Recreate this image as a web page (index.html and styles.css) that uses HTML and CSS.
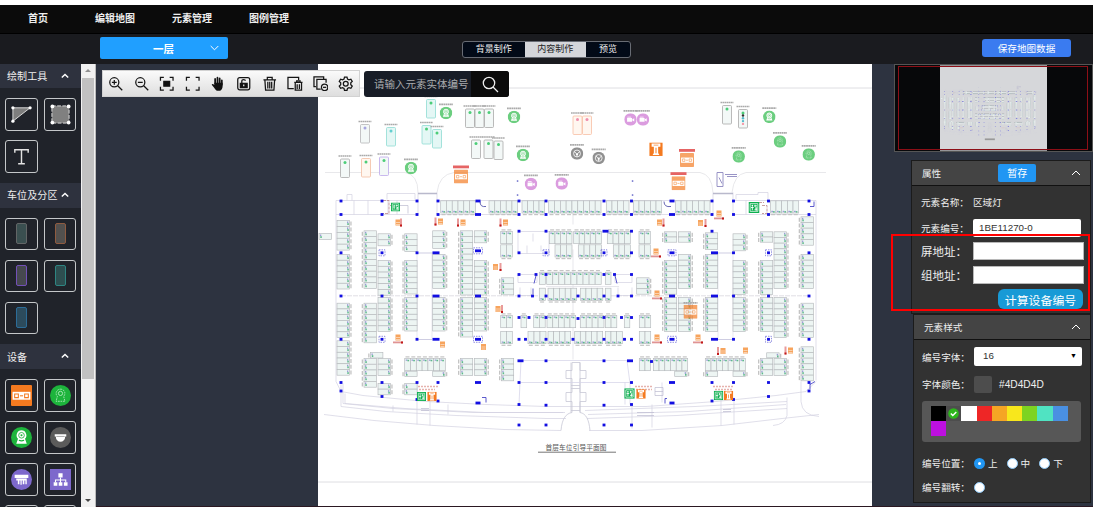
FILE: index.html
```html
<!DOCTYPE html>
<html lang="zh-CN">
<head>
<meta charset="utf-8">
<title>编辑地图</title>
<link rel="stylesheet" href="styles.css">
</head>
<body>
<svg width="0" height="0" class="defs">
  <defs>
    <symbol id="up" viewBox="0 0 10 6"><path d="M1 5l4-4 4 4" fill="none" stroke="currentColor"/></symbol>
    <symbol id="screen" viewBox="0 0 20 20"><rect width="20" height="20" rx="1" fill="#f47a20"/><rect x="1.500" y="6.500" width="17" height="7.500" fill="#fff"/><path d="M3.500 8.500H7v3.500H3.500zM13 8.500h3.500v3.500H13z" fill="none" stroke="#f47a20"/><path d="M8.500 10.300h3" stroke="#f47a20"/></symbol>
    <symbol id="cam" viewBox="0 0 20 20"><circle cx="10" cy="10" r="10" fill="#1db43c"/><path d="M10 3.200a4.700 4.700 0 0 1 3.300 8l.7 2 1 2.800H5l1-2.800.7-2a4.700 4.700 0 0 1 3.300-8z" fill="#fff"/><circle cx="10" cy="7.900" r="2.700" fill="none" stroke="#1db43c" stroke-width=".8"/><circle cx="10" cy="7.900" r="1" fill="#1db43c"/><path d="M7.500 12.700q2.500 1 5 0" fill="none" stroke="#1db43c"/></symbol>
    <symbol id="camline" viewBox="0 0 20 20"><circle cx="10" cy="10" r="10" fill="#1db43c"/><path d="M10 4a4 4 0 0 1 3 6.800l1.200 4.700H5.800L7 10.800A4 4 0 0 1 10 4z" fill="none" stroke="#b9ecc3" stroke-width=".8" stroke-dasharray="1.600 .8"/><circle cx="10" cy="8" r="2" fill="none" stroke="#b9ecc3" stroke-width=".8"/></symbol>
    <symbol id="dome" viewBox="0 0 20 20"><circle cx="10" cy="10" r="10" fill="#5b5b5b"/><path d="M4.500 7h11v2h-1a4.500 5 0 0 1-9 0h-1z" fill="#fff"/><path d="M6 9h8" stroke="#777" stroke-width=".6"/></symbol>
    <symbol id="purplecam" viewBox="0 0 20 20"><circle cx="10" cy="10" r="10" fill="#b83cc0"/><path d="M4.500 7.500h8v6h-8zM13 9.500l3-1.500v5l-3-1.500zM5 5.500h6v1.300H5z" fill="#fff"/></symbol>
    <symbol id="reel" viewBox="0 0 20 20"><circle cx="10" cy="10" r="10" fill="#555"/><circle cx="10" cy="10" r="5.500" fill="none" stroke="#fff" stroke-width="1.300"/><circle cx="10" cy="11" r="1.800" fill="#fff"/><path d="M5.500 7l3 2.500M14.500 7l-3 2.500M10 11v4" stroke="#fff" stroke-width="1.500"/></symbol>
    <symbol id="pillar" viewBox="0 0 20 20"><rect width="20" height="20" fill="#f47a20"/><path d="M3.500 1.500h13v5h-3.300v9l1.800 3H5l1.800-3v-9H3.500z" fill="#fff"/><path d="M6.500 4h7" stroke="#f47a20"/><path d="M9 8h2v8H9z" fill="#f7a15f"/></symbol>
    <symbol id="lift" viewBox="0 0 20 20"><rect width="20" height="20" fill="#0daf50"/><path d="M3 3h14v14H3z" fill="none" stroke="#fff" stroke-width="1.300"/><circle cx="7" cy="6.500" r="1.500" fill="#fff"/><path d="M7 8v7M4.500 10h5M12 5v4M10.500 7h5M12 11h4M14 10v6M11 14h5" stroke="#fff" stroke-width="1.600"/></symbol>
  </defs>
</svg>
<div class="app">
  <nav class="nav"><a>首页</a><a>编辑地图</a><a>元素管理</a><a>图例管理</a></nav>
  <header class="bar">
    <button class="floor"><span>一层</span><svg width="9" height="6" viewBox="0 0 9 6"><path d="M.7 1l3.800 3.800L8.300 1" fill="none" stroke="#fff"/></svg></button>
    <div class="tabs"><span>背景制作</span><span class="on">内容制作</span><span>预览</span></div>
    <button class="save">保存地图数据</button>
  </header>
  <main class="work">
    <aside class="side">
      <h3 class="top">绘制工具<svg class="chev"><use href="#up"/></svg></h3>
      <div class="tiles">
        <div class="tile"><svg viewBox="0 0 22 22"><path d="M2 4h18L2 18z" fill="#7d7d7d"/><path d="M2 4h18L2 18z" fill="none" stroke="#ddd"/><g fill="#fff"><circle cx="2" cy="4" r="1.700"/><circle cx="20" cy="4" r="1.700"/><circle cx="2" cy="18" r="1.700"/></g></svg></div>
        <div class="tile"><svg viewBox="0 0 22 22"><rect x="2" y="2" width="18" height="18" fill="#808080" stroke="#ddd" stroke-dasharray="4 1.500"/><g fill="#fff"><circle cx="2.500" cy="2.500" r="2"/><circle cx="19.500" cy="2.500" r="2"/><circle cx="2.500" cy="19.500" r="2"/><circle cx="19.500" cy="19.500" r="2"/></g></svg></div>
        <div class="tile"><svg viewBox="0 0 22 22"><path d="M4 7V4h14v3M11 4v14.500M7.500 18.500h7" fill="none" stroke="#e2e2e2" stroke-width="1.500"/></svg></div>
      </div>
      <h3>车位及分区<svg class="chev"><use href="#up"/></svg></h3>
      <div class="tiles">
        <div class="tile"><i class="lot gray"></i></div><div class="tile"><i class="lot orange"></i></div>
        <div class="tile"><i class="lot violet"></i></div><div class="tile"><i class="lot teal"></i></div>
        <div class="tile"><i class="lot blue"></i></div>
      </div>
      <h3>设备<svg class="chev"><use href="#up"/></svg></h3>
      <div class="tiles">
        <div class="tile"><svg><use href="#screen"/></svg></div><div class="tile"><svg><use href="#camline"/></svg></div>
        <div class="tile"><svg><use href="#cam"/></svg></div><div class="tile"><svg><use href="#dome"/></svg></div>
        <div class="tile"><svg viewBox="0 0 20 20"><circle cx="10" cy="10" r="10" fill="#7d68cc"/><path d="M3.500 5.500h13v3h-13zM5 9h10v5.500h-1.300V11h-1v3.500h-1.500V11h-1v4H9v-4H8v3.500H6.500V11H5z" fill="#fff"/></svg></div>
        <div class="tile"><svg viewBox="0 0 20 20"><rect width="20" height="20" fill="#7d68cc"/><path d="M8 4h4v4H8zM3.500 12.500H7V16H3.500zM8.300 12.500h3.500V16H8.300zM13.200 12.500h3.500V16h-3.500z" fill="#fff"/><path d="M10 8v5M5.200 12.500v-2H15v2" fill="none" stroke="#fff"/></svg></div>
        <div class="tile"></div><div class="tile"></div>
      </div>
    </aside>
    <div class="scroll"><b class="tri t-up"></b><div class="thumb"></div><b class="tri t-down"></b></div>
    <section class="stage">
      <svg class="map" viewBox="318 65 554 442">
        <path d="M318 88.500h554M318 482.500h554" stroke="#dedee2"/>
        <g id="plan"></g>
        <g id="pins"></g>
        <text x="545.500" y="450.300" textLength="61" class="caption">首层车位引导平面图</text>
        <path d="M538 452.700h78" stroke="#666" stroke-width=".9"/>
      </svg>
      <div class="tools">
        <svg viewBox="0 0 16 16"><circle cx="6.500" cy="6.500" r="4.700"/><path d="M10 10l4.700 4.700M4 6.500h5M6.500 4v5"/></svg>
        <svg viewBox="0 0 16 16"><circle cx="6.500" cy="6.500" r="4.700"/><path d="M10 10l4.700 4.700M4 6.500h5"/></svg>
        <svg viewBox="0 0 16 16"><path d="M1.500 5V1.500H5M11 1.500h3.500V5M14.500 11v3.500H11M5 14.500H1.500V11"/><path d="M5 5.500h6v5H5z" fill="#111"/></svg>
        <svg viewBox="0 0 16 16"><path d="M1.500 5V1.500H5M11 1.500h3.500V5M14.500 11v3.500H11M5 14.500H1.500V11"/></svg>
        <svg viewBox="0 0 16 16"><path d="M5.300 8V3M7.700 7.500V1.800M10 7.500V2.500M12.200 9V4.500" stroke-width="1.800" stroke-linecap="round"/><path d="M4.500 7h8.500v3.500c0 2-1 4-2.500 4.700H7C5 13.500 3.500 11 1.800 9c0-1.300 1.500-1 2.700.3z" fill="#111" stroke="none"/></svg>
        <svg viewBox="0 0 16 16"><rect x="1.800" y="1.800" width="12.400" height="12.400" rx="2"/><path d="M4.500 7.500h7v4.500h-7z" fill="#111"/><path d="M6 7.500V5c0-1.800 3.700-1.800 3.700 0"/><path d="M8 8.700v2" stroke="#eee"/></svg>
        <svg viewBox="0 0 16 16"><path d="M1.500 4h13M5.500 3.500v-2h5v2M3 4.500l.7 10h8.600l.7-10M6 6v7M8 6v7M10 6v7"/></svg>
        <svg viewBox="0 0 16 16"><path d="M7 13H1V1.500h11V4M7.500 6.500H16M10 6V5h3.500v1M8.500 7v7.500h6.500V7M10.500 8.500v5M12.800 8.500v5"/></svg>
        <svg viewBox="0 0 16 16"><path d="M3 11H1V1h10v2M8 13.500H4V3.500h9.500V7"/><circle cx="12" cy="11.700" r="3.300"/><path d="M10.300 11.700h3.400"/></svg>
        <svg viewBox="0 0 16 16"><path d="M6.700 1.200h2.600l.5 2 1.500.8 2-.7 1.400 2.300-1.500 1.400v2l1.500 1.400-1.400 2.300-2-.7-1.500.8-.5 2H6.700l-.5-2-1.500-.8-2 .7-1.400-2.300L2.800 9V7L1.300 5.600l1.400-2.300 2 .7 1.500-.8z"/><circle cx="8" cy="8" r="2.500"/></svg>
      </div>
      <div class="search"><span>请输入元素实体编号</span><i><svg width="17" height="17" viewBox="0 0 17 17"><circle cx="7" cy="7" r="5.700"/><path d="M11 11l5 5"/></svg></i></div>
      <div class="mini"><svg viewBox="318 65 554 442"><rect x="318" y="65" width="554" height="442" fill="#d6d7da"/><use href="#plan" opacity=".75"/><path d="M550 448h52" stroke="#999" stroke-width="9"/></svg><div class="view"></div></div>
      <div class="props">
        <section class="panel first">
          <div class="phead">属性<button>暂存</button><svg class="chev"><use href="#up"/></svg></div>
          <div class="row name"><label>元素名称：</label><span>区域灯</span></div>
          <div class="row num"><label>元素编号：</label><span class="input">1BE11270-0</span></div>
          <div class="row addr"><label>屏地址：</label><span class="box"></span></div>
          <div class="row addr"><label>组地址：</label><span class="box"></span></div>
          <button class="calc">计算设备编号</button>
        </section>
        <section class="panel second">
          <div class="phead">元素样式<svg class="chev"><use href="#up"/></svg></div>
          <div class="row font"><label>编号字体：</label><span class="input">16<b>▼</b></span></div>
          <div class="row color"><label>字体颜色：</label><i class="chip"></i><span>#4D4D4D</span></div>
          <div class="palette"><i class="c0"></i><i class="c1"><svg width="11" height="11" viewBox="0 0 11 11"><circle cx="5.500" cy="5.500" r="5.300" fill="#2db51c"/><path d="M2.800 5.500l2 2 3.500-3.500" fill="none" stroke="#fff" stroke-width="1.400"/></svg></i><i class="c2"></i><i class="c3"></i><i class="c4"></i><i class="c5"></i><i class="c6"></i><i class="c7"></i><i class="c8"></i><i class="c9"></i></div>
          <div class="row pos"><label>编号位置：</label><i class="radio sel"></i><span>上</span><i class="radio"></i><span>中</span><i class="radio"></i><span>下</span></div>
          <div class="row flip"><label>编号翻转：</label><i class="radio"></i></div>
        </section>
      </div>
      <div class="mark"></div>
    </section>
  </main>
</div>
<script src="map.js"></script>
</body>
</html>
```
FILE: styles.css
```css
* { box-sizing: border-box; }
body { margin: 0; background: #fff; font-family: "Liberation Sans", "Noto Sans CJK SC", sans-serif; font-size: 10px; color: #eee; }
button { border: 0; padding: 0; color: #fff; font-family: inherit; }
i { font-style: normal; display: block; }
.defs { position: absolute; }
.app { width: 1093px; height: 507px; padding-top: 5px; overflow: hidden; display: flex; flex-direction: column; }
.nav { height: 29px; flex: none; background: #0b0b0b; border-bottom: 1px solid #000; display: flex; align-items: center; padding-left: 28px; font-weight: 600; }
.nav a { margin-right: 37px; line-height: 28px; }
.nav a:first-child { margin-right: 47px; }
.bar { height: 30px; flex: none; background: #1a1b1f; display: flex; align-items: flex-start; padding: 3px 22px 0 100px; }
.floor { width: 128px; height: 22px; margin-right: 234px; background: #209fff; border-radius: 2px; display: flex; align-items: center; justify-content: flex-end; font-size: 10.5px; font-weight: 700; padding-right: 9px; }
.floor span { margin-right: 36px; }
.tabs { height: 17px; margin-top: 4px; display: flex; border: 1px solid #686c74; border-radius: 3px; overflow: hidden; background: #020a17; font-size: 9px; line-height: 15px; text-align: center; width: 169px; }
.tabs span { width: 61.500px; }
.tabs span:last-child { flex: 1; }
.tabs .on { background: #d4d6da; color: #222; }
.save { margin: 2px 0 0 auto; width: 89px; height: 18px; background: #3a7bf0; border-radius: 3px; font-size: 9.600px; }
.work { flex: 1; min-height: 0; display: flex; background: #2d3340; }
.side { width: 81px; background: #20232a; overflow: hidden; flex: none; }
.side h3 { margin: 0; height: 25px; background: #2e323e; padding: 0 12px 1px 7px; display: flex; align-items: center; justify-content: space-between; font-weight: 400; font-size: 10px; letter-spacing: .1px; }
.side .top { height: 24px; }
.chev { width: 10px; height: 6px; color: #fff; }
.side .chev { width: 8px; stroke-width: 1.800; }
.side .chev use { stroke-width: 1.800; }
.tiles { display: grid; grid-template-columns: 33px 32px; grid-auto-rows: 32.500px; gap: 9.500px 6px; padding: 10px 5px; }
.tile { border: 1px solid #c4c7c9; border-radius: 3px; display: flex; align-items: center; justify-content: center; }
.tile svg { width: 21px; height: 21px; }
.lot { width: 11px; height: 21px; border: 1px solid #555f61; border-radius: 2px; background: #3a4f50; }
.lot.gray { border-color: #626566; }
.lot.orange { background: #52504e; border-color: #8f5b40; }
.lot.violet { background: #46484f; border-color: #7250b8; }
.lot.teal { background: #2d4e50; border-color: #2e8582; }
.lot.blue { background: #2c4b5d; border-color: #2c6c98; }
.scroll { width: 15px; flex: none; background: #f1f1f1; border-right: 1px solid #bbb; display: flex; flex-direction: column; align-items: center; }
.tri { border: 3px solid transparent; margin: 2px 0 6px; }
.t-up { border-bottom-color: #909090; }
.t-down { border-top-color: #444; margin: auto 0 2px; }
.thumb { width: 12px; height: 301px; background: #c1c1c1; }
.stage { flex: 1; position: relative; overflow: hidden; border-bottom: 1px solid #2b1822; }
.map { position: absolute; left: 222px; top: 0; width: 554px; height: 443px; background: #fff; }
.caption { font: 6.700px "Noto Sans CJK SC", sans-serif; fill: #555; }
.tools { position: absolute; left: 6px; top: 6px; width: 258px; height: 27px; padding: 0 5px; background: linear-gradient(#fafafa, #dedede); border: 1px solid #d2d2d2; display: flex; align-items: center; justify-content: space-between; }
.tools svg { width: 15.500px; height: 15.500px; fill: none; stroke: #151515; stroke-width: 1.300; }
.search { position: absolute; left: 268px; top: 7px; width: 145px; height: 26px; background: #181d27; border-radius: 3px; overflow: hidden; display: flex; align-items: center; font-size: 10.500px; color: #a9abae; }
.search span { flex: 1; padding: 0 0 2px 10px; white-space: nowrap; }
.search i { width: 38px; height: 26px; background: #0b0b0b; display: flex; align-items: center; justify-content: center; }
.search svg { fill: none; stroke: #eee; stroke-width: 1.300; }
.mini { position: absolute; left: 798px; top: 0; width: 199px; height: 88px; background: #07080a; border: 1px solid #555; display: flex; }
.mini svg { width: 107px; height: 86px; margin-left: 45px; }
.view { position: absolute; left: 3px; top: 1px; width: 190px; height: 84px; border: 1px solid #8d0f17; }
.props { position: absolute; left: 815px; top: 96px; width: 180px; }
.panel { background: #323232; border: 1px solid #1b1b1b; }
.first { height: 154px; }
.second { margin: 0 0 0 2px; height: 189px; }
.phead { height: 25px; background: #444; border-bottom: 1px solid #111; display: flex; align-items: center; padding: 0 9px 1px 10px; font-size: 9.600px; }
.phead .chev { margin-left: auto; }
.phead button { width: 38px; height: 18px; margin-left: 57px; background: #2196f3; border-radius: 2px; font-size: 10px; }
.row { display: flex; align-items: center; font-size: 9.600px; padding-left: 9px; white-space: nowrap; }
.row label { width: 52px; }
.name { height: 32px; }
.num { height: 20px; }
.input { width: 108px; height: 18px; border-radius: 2px; background: #fff; color: #333; line-height: 18px; padding: 0 5px 0 6px; font-size: 9.800px; display: flex; justify-content: space-between; }
.input b { color: #000; font-size: 7px; }
.addr { height: 24px; font-size: 11.500px; }
.num + .addr { margin-top: 1px; }
.box { width: 111px; height: 18px; border: 1px solid #b8b8b8; background: #fff; margin-top: 0; }
.calc { display: block; width: 85px; height: 20px; margin: 2px 0 0 86px; border-radius: 6px; background: #189ad6; font-size: 11.900px; }
.font { height: 33px; padding-left: 8px; }
.font .input { padding-left: 9px; height: 19px; }
.color { height: 22px; padding-left: 8px; }
.color span { font-size: 10.200px; }
.chip { width: 18px; height: 17px; border-radius: 2px; background: #4d4d4d; margin-right: 7px; }
.palette { margin: 6px 0 0 8px; width: 159px; height: 41px; padding: 5px 9px; background: #575757; border-radius: 3px; display: grid; grid-template-columns: repeat(9, 15.200px); grid-auto-rows: 15px; }
.c0 { background: #000; } .c1 { background: #4d4d4d; padding: 2px; } .c2 { background: #fff; } .c3 { background: #ee2626; } .c4 { background: #f5a524; }
.c5 { background: #f8e71c; } .c6 { background: #7ed321; } .c7 { background: #50e3c2; } .c8 { background: #4a90e2; } .c9 { background: #bd10e0; }
.pos { height: 24px; margin-top: 9px; padding-left: 8px; }
.flip { height: 24px; padding-left: 8px; }
.radio { width: 11px; height: 11px; border-radius: 50%; background: #fff; border: .5px solid #8ec8f6; }
.radio.sel { background: #fff; border: 4px solid #2196f3; }
.row span + .radio { margin-left: 9px; }
.radio + span { margin-left: 3px; }
.mark { position: absolute; left: 795px; top: 170px; width: 199px; height: 77px; border: 2px solid #f00; }
```
FILE: map.js
```js
const out = [];
const rect = (x, y, w, h, fill, extra = '') => out.push(`<rect x="${x}" y="${y}" width="${w}" height="${h}" fill="${fill}" ${extra}/>`);
const path = (d, stroke = '#d2d1e1', w = .7, extra = '') => out.push(`<path d="${d}" fill="none" stroke="${stroke}" stroke-width="${w}" ${extra}/>`);
const lot = 'stroke="#b5b9bc" stroke-width=".65"';

// building outline, roads and stairs
path('M325 173H405q13 2 13 20M437 193q2-18 17-20H700q12 2 13 20M732 193q2-18 14-20H826', '#dedee2');
path('M418 193v22M437 193v22M713 193v22M733 193v22');
path('M418 194h19M713 194h20', '#b9b9cc', 1.300);
path('M336 201H418M437 201H713M733 201H816M336 215H418M437 215H520M590 215H713M733 215H816M336 201V382M816 201V381');
path('M341 296.300H810', '#d2d1da', .7, 'stroke-dasharray="5 1"');
path('M417 253.500H438M718 253.500H733M417 340H432M718 340H733', '#b9b8d6');
path('M417 253v86M432 253v86M718 253v86M733 253v86', '#e0dfe9');
path('M354 201v14M368 201v14M388 201v14M397 201v14M746 201v14M387 200v-6h28v6M736 200v-5h22v-2h10v7M347 201v-6h5v6');
path('M336 382l5 10 22 4 63 6 60 3 60 2h100l70-5 60-6 30-4 10-10');
path('M341 385v22l45 5 70 4 90 3h20M587 419l90-3 110-7M343 384v20l50 5 80 4h90M588 415l100-3 98-7M345 394v10l60 5 80 4h80M585 411l110-4 92-5');
path('M324 415l50 6 60 5 70 4 57 1M589 431h53l80-5 60-7 37-4');
path('M417 383v42M430 398v28M721 398v28M734 398v27M652 405v23M632 405v24M801 382v20q1 14 18 15M787 398v18q-2 9-14 10M448 405v10M393 406v6');
path('M561 431c1-12 5-17 11-18V402h-6v-9h6v-14h-6v-8h6v-8h8v8h6v8h-6v14h6v9h-6v11c6 1 9 7 10 18', '#c8c8d6', .8);
path('M571 363v50M580 363v50M571 386h9M571 389h9M571 411h9', '#c8c8d6', .8);
path('M521 361h110M521 361l-2 44M627 361l3 23M518 383h112M630 383v22M662 383v20M625 383v22', '#d2d1e6');
path('M546 287h73M573 205v20M573 250v110', '#dddde4', .7);
path('M518 232h31v22h-31zM518 275h19v8h-19zM615 275h17v8h-17zM520 288v8h11v-8M618 288v8h14v-8M533 234v8M527 246v8M541 246v6');
path('M383 201h6v13h-6M390 206h8M755 203h9M762 206h5v8h-5', '#b88', .8, 'stroke-dasharray="3 1"');
path('M418 387h20M635 387h18M713 387h20M636 390h16M419 390h16M715 390h17', '#e6b3ae', 1.500, 'stroke-dasharray="2 1"');
path('M395 206h13v8M655 388h8v8h-8zM655 392h8M421 409h8M421 411h8M637 413h17M637 416h17M723 410h8M723 412h8', '#bbbad0');
path('M486 207q-6 1-6-5M664 202q0 6 7 5', '#5555aa', .9);
path('M717 173h6v14h-6zM719 178l3 6M725 175h12M727 177h10', '#8d88bf', .9);

// stalls lying on their side: x, top, bottom, count, marker side
const stacks = [
  [337,221,250.600,5,1],[337,255,289.500,6,1],[337,303.700,338,6,1],[337,341.300,375.700,6,1],
  [364,231.300,289,10,0],[364,303.700,343.300,7,0],[364,359,387.700,5,0],
  [378,234.300,246.300,2,1],[378,261,295.700,6,1],[378,298,332,6,1],[378,359,376,3,1],[378,384,395.300,2,1],
  [404.700,234.300,252,3,0],[404.700,261,294.500,6,0],[404.700,298,331.500,6,0],[404.700,384,395.300,2,0],
  [432.700,231.300,249,3,1],[432.700,255,289,6,1],[432.700,298,331.500,6,1],
  [460.300,231.300,295.500,11,0],[460.300,298,337.500,7,0],[460.300,359,376,3,0],
  [474.300,231.300,243.300,2,1],[474.300,261,295.500,6,1],[474.300,298,331.500,6,1],[474.300,359,376,3,1],
  [501.300,278.300,295.300,3,0],[501.300,359,381.300,4,0],[370.500,353,358.500,1,0],[319,234,240,1,0],
  [404.700,371.700,377,1,0],[432.700,371.700,377,1,1],
  [664.300,232.300,242.700,2,0],[664.300,261,294.700,6,0],[664.300,298,332,6,0],
  [678.300,232.300,242.700,2,1],[678.300,255,289,6,1],[678.300,298,332,6,1],
  [705.300,233.300,250,3,0],[705.300,255,289,6,0],[705.300,298,332,6,0],
  [733,234.300,251.300,3,1],[733,261,295,6,1],[733,298,332,6,1],
  [760.300,232.300,242.700,2,0],[760.300,261,295,6,0],[760.300,298,332,6,0],[760.300,359,376,3,0],
  [774,232.300,289,10,1],[774,298,338,7,1],[774,359,376,3,1],
  [801,217.300,245.700,5,0],[801,255,289,6,0],[801,303.700,338,6,0],[801,347.300,381.300,6,0],
  [636.700,278.300,294.700,3,1],[674.700,371.700,377,1,1],[705.300,371.700,377,1,0],[733,371.700,377,1,1],[766.700,353.300,358.300,1,1]
];
for (const [x, a, b, n, right] of stacks) {
  const p = (b - a) / n;
  for (let i = 0; i < n; i++) {
    const y = a + i * p, m = right ? x + 10 : x + 1;
    rect(x, y, 12.400, p, '#edf5f3', lot);
    rect(m, y + 1, 1.300, 1.700, '#9c9cd8');
    rect(m + .3, y + 2.700, 1.500, 1.800, '#5dba8a');
    rect(right ? x + 13.300 : x - 2.300, y + 1, 1.300, 4, '#c4c4c4');
  }
}

// upright stalls: x, y, count, total width, marker at bottom
const rows = [
  [440.700,201.300,6,34.600,1],[489,201.300,5,28.700,1],[522,201.300,4,22.700,1],[548.700,201.300,9,52.300,1],[606.300,201.300,4,22.700,1],[633.300,201.300,5,28.400,1],[675.300,201.300,6,34.700,1],[770.300,201.300,5,28.400,1],
  [500.700,232,2,11.600,0],[549.300,232,4,22.700,0],[573.700,232,5,27.600,0],[607.300,232,4,23,0],[639,232,2,11.300,0],
  [500.700,245.300,2,11.600,1],[555,245.300,3,17,1],[578.300,245.300,4,23,1],[613.300,245.300,3,17,1],[639,245.300,2,11.300,1],
  [539.300,272.700,1,6,0],[546.700,272.700,9,54.500,0],[605.300,272.700,1,5.700,0],
  [539.300,288.700,1,6,1],[548,288.700,5,28.700,1],[580.300,288.700,4,22.500,1],[605.300,288.700,1,5.700,1],
  [500.700,316,2,11.600,0],[521,316,1,5.700,0],[533.700,316,2,11.500,0],[547,316,5,28.700,0],[580.300,316,4,23.700,0],[605.300,316,2,11.500,0],[624.300,316,1,5.500,0],[639.300,316,2,11.400,0],
  [500.700,332,2,11.600,1],[528,332,3,18,1],[548,332,4,22.700,1],[574.700,332,5,28,1],[605.300,332,3,17,1],[639.300,332,2,11.400,1],
  [404.700,359,7,40.600,0],[639.300,359,2,11.300,0],[653.300,359,6,34.400,0],[705.300,359,7,40,0]
];
for (const [a, y, n, w, low] of rows) {
  const p = w / n;
  for (let i = 0; i < n; i++) {
    const x = a + i * p, m = low ? y + 10 : y + 1;
    rect(x, y, p, 12.200, '#edf5f3', lot);
    rect(x + 1, m, 1.700, 1.300, '#9c9cd8');
    rect(x + 2.700, m + .3, 1.700, 1.500, '#5dba8a');
    rect(x + .8, low ? y + 13.200 : y - 2.200, 4, 1.200, '#c4c4c4');
  }
}

// columns: x, y and an optional width
const cols = [
  [341,201.500],[382,201.500],[417,201.500],[438,201.500],[478,201.500,5],[519,201.500],[546,201.500],[604,201.500],[631.500,201.500],[672,201.500,5],[712,201.500],[733.500,201.500],[768.500,201.500],[809,201.500],
  [341,215],[382,215],[417,215],[438,215],[478,215,6],[519,215],[546,215],[604,215],[631.500,215],[672,215,6],[712,215],[733.500,215],[768.500,215],[809,215],
  [519,231.700],[546,231.700],[605.500,231.700,6],[631.500,231.700],[712,231.700],
  [341,253.300],[382,253.300],[417,253.300],[436,253.300,7],[478,251.300,6],[519,253.300],[546,253.300],[604,253.300],[631.500,253.300],[672,253.300,5],[714.500,253.300,7],[733.500,253.300],[768.500,253.300],[809,253.300],
  [519,275],[536,275],[546,275],[604,275],[614.500,275],[631.500,275],
  [341,296.500],[382,296.500],[417,296.500],[436,296.500,7],[478,296.500,6],[519,296.500],[532.500,296.500],[546,296.500],[578,296.500],[604,296.500],[618,296.500],[631.500,296.500],[672,296.500,6],[714.500,296.500,7],[733.500,296.500],[768.500,296.500],[809,296.500],
  [519,318],[529,318],[546,318],[578,319],[604,318],[621.500,318],[631.500,318],
  [341,339.800],[382,339.800],[417,339.800],[436,339.800,7],[478,339.800,6],[519,339.800],[525.500,339.800],[546,339.800],[573,339.800],[604,339.800],[624.500,339.800],[631.500,339.800],[672,339.800,5],[714.500,339.800,7],[733.500,339.800],[768.500,339.800],[809,339.800],
  [520.500,361.300,6],[546,361.300],[604,361.300],[630,361.300,6],[651.500,362],
  [341,383],[382,383],[417,383],[438,383],[478,383,6],[519,383],[546,383],[604,383],[631.500,383],[672,383,6],[712,383],[733.500,383],[768.500,383],[809,383],
  [341,391.500],[382,397],[417,400],[438,401.500],[478,403.500,5],[519,405],[546,405.700],[604,405.700],[631.500,405],[672,403.500,5],[712,401.500],[733.500,400],[768.500,397],[809,391.500],
  [519,425.500],[546,425.500],[604,425.500],[631.500,425.500]
];
for (const [x, y, w = 2.900] of cols) rect(x - w / 2, y - 1.400, w, 2.800, '#120ee2');
for (const [x, y] of [[517.500,181.500],[517.500,195.500],[632.500,181.500],[632.500,195.500]]) rect(x - .7, y - .7, 1.500, 1.500, '#6669c8');
for (const [x, y, w] of [[382,253.300,6],[478,251.300,9],[546,253.300,6],[604,253.300,6],[672,253.300,8],[768.500,253.300,6],[382,339.800,6],[478,339.800,9],[672,339.800,9],[768.500,339.800,6]])
  rect(x - w / 2, y - 3, w, 6, 'none', 'stroke="#6967d5" stroke-width=".7" stroke-dasharray="1.500 1"');
path('M814 202v5h-4M810 385l5-3M482 398h4v5M536 276l-2 8M615 276l2 8M533 289v6M667 399h-2v5M810 384v6', '#4a47c7', .9);
document.getElementById('plan').innerHTML = out.splice(0).join('');

// guidance signs: x, y, red bar orientation and offset
const signs = [[398,223,'v',3],[440.500,222,'v',-5],[463,223,'v',-5],[505.500,223,'v',-5],[495.500,267.500,'v',5],[498,309.500,'v',4],[398,338,'h'],[442.500,345,''],[483.500,347.500,''],[659.500,223,'v',4],[700.500,223.500,'v',5],[719,214,'h'],[656,252,'h'],[657,294,'h'],[657,338,'h'],[698,338,'h'],[723,351.500,'v',-5],[745.500,351,''],[790.500,351,'v',-5]];
for (const [x, y, o, d] of signs) {
  rect(x - 2.500, y - 3, 5, 6, '#f7a45d');
  path(`M${x - 2} ${y}h4M${x - 2} ${y + 2}h4`, '#fbe4cf', .7);
  if (o === 'v') { rect(x + d - 1, y - 4, 2, 8, '#e99b9b'); rect(x + d - 1, y + 2, 2, 2, '#c11a1a'); }
  if (o === 'h') { rect(x - 5, y + 4, 10, 1.800, '#e09393'); rect(x + 3, y + 4, 2, 2, '#c11a1a'); }
}

// free-standing lots above the building
const lots = [[426.500,100,'#8fdcd3'],[422,126,'#8fdcd3'],[432.500,130,'#8fdcd3'],[386.500,128,'#8fdcd3','#63cfd0'],[360.500,125,'#b5b5b8','#a7a6e0'],[340.500,159.500,'#aaa'],[361.500,159,'#f3bea1'],[379.500,157.500,'#bda8eb'],[465.500,109.500,'#aaa'],[475,109.500,'#aaa'],[484.500,109.500,'#aaa'],[471.500,140.500,'#aaa'],[484,140.500,'#aaa'],[494,141.500,'#aaa'],[573,116.500,'#f8bfa3','#f08dac'],[582.500,116.500,'#f8bfa3','#f08dac'],[722.500,106,'#aaa'],[738.500,110,'#aaa']];
for (const [x, y, s, c = '#4ccd78'] of lots) {
  rect(x, y, 9, 18.500, s === '#8fdcd3' ? '#e4f7f5' : s === '#f3bea1' || s === '#f8bfa3' ? '#fff7f0' : '#f3f8f7', `rx="1" stroke="${s}" stroke-width=".8"`);
  out.push(`<circle cx="${x + 4.500}" cy="${y + 3.500}" r="1.500" fill="${c}"/>`);
  path(`M${x - 2} ${y - 3}h13`, '#aaa', 1.700, 'stroke-dasharray="1.700 .4"');
}
['#333', '#5bc', '#5bc', '#f59ba9'].forEach((c, i) => out.push(`<circle cx="743" cy="${116 + i * 2.800}" r="1.200" fill="${c}"/>`));
const icon = (id, x, y, s, o = 1) => out.push(`<use href="#${id}" x="${x - s / 2}" y="${y - s / 2}" width="${s}" height="${s}" opacity="${o}"/>`);
const tag = (x, y) => path(`M${x - 7} ${y}h14`, '#aaa', 1.700, 'stroke-dasharray="1.800 .4"');
for (const [id, x, y, o] of [['cam',446,113.500,.65],['cam',514,117.500,.65],['cam',523,155.500,.65],['cam',411,168.500,.65],['cam',769.300,117.300,.65],['camline',780,142,.65],['camline',738.700,157,.65],['camline',808.700,155,.65],['purplecam',531,184.500,.5],['purplecam',561.700,184,.5],['purplecam',630.500,120,.5],['purplecam',643,120,.5],['reel',577,154,.65],['reel',598.700,158.500,.65]]) {
  icon(id, x, y, 12.500, o);
  tag(x, y - 8.700);
}
icon('pillar', 656, 149.700, 13.500);
for (const [x, y] of [[461,177],[687,160.500],[678.500,183.700],[690.500,312.300]]) {
  icon('screen', x, y, 14, .68);
  if (y < 300) rect(x - 8, y - 11, 16, 2.800, '#e56464'); else tag(x, y - 9);
}
for (const [x, y, s] of [[395.500,207.500,9],[754,208,11],[421.500,397,9],[629.500,394,10.500],[718.500,396,9.500]]) icon('lift', x, y, s);
for (const [x, y] of [[432,397],[641,394.500],[728.500,396]]) icon('pillar', x, y, 9.500);
document.getElementById('pins').innerHTML = out.join('');
```
